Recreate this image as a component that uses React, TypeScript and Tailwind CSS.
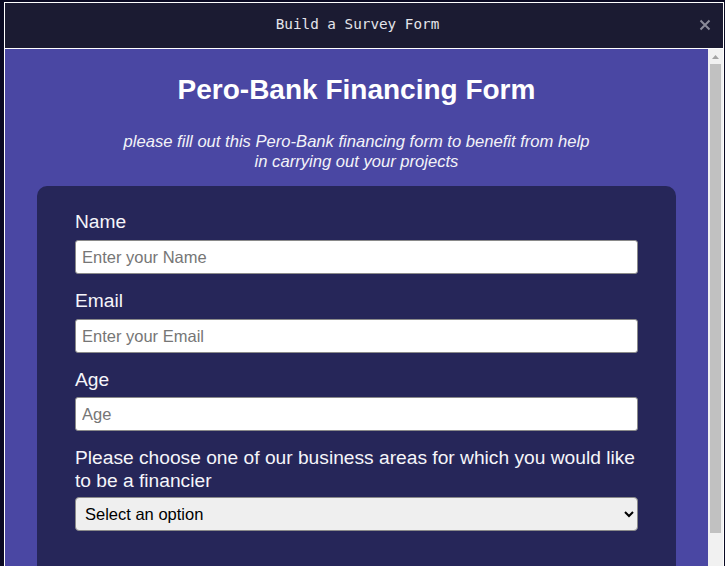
import React from "react";

export default function App() {
  const sans = { fontFamily: '"Liberation Sans", Arial, sans-serif' };
  return (
    <div className="relative w-[725px] h-[566px] overflow-hidden bg-[#0a0a23] pt-[2px] pl-[4px] pr-[1px]" style={sans}>
      <div className="relative flex flex-col w-[720px] h-[564px] border-l border-r border-t border-white">
        <div className="relative flex items-center justify-center h-[46px] shrink-0 bg-[#1b1b32] border-b border-white pr-[13px] pb-[2px]">
          <span
            className="text-[14.3px] text-[#e4e4ea]"
            style={{ fontFamily: '"DejaVu Sans Mono", monospace' }}
          >
            Build a Survey Form
          </span>
          <svg
            className="absolute right-[12px] top-[16px]"
            width="12"
            height="12"
            viewBox="0 0 12 12"
          >
            <path d="M1.5 1.5 L10.5 10.5 M10.5 1.5 L1.5 10.5" stroke="#8a8a98" strokeWidth="2" />
          </svg>
        </div>
        <div className="flex flex-1 overflow-hidden">
          <div className="flex-1 bg-[#4a47a3] pt-[25px] px-[32px] text-white">
            <h1 className="text-center text-[28px] leading-[32px] font-bold">Pero-Bank Financing Form</h1>
            <p className="mt-[26px] text-center italic text-[16.6px] leading-[20px] text-[#f3f3f8]">
              please fill out this Pero-Bank financing form to benefit from help
              <br />
              in carrying out your projects
            </p>
            <div className="mt-[14px] rounded-[10px] bg-[#262659] px-[38px] pt-[24px] pb-[80px]">
              <div className="flex flex-col gap-[15px]">
                <div className="flex flex-col">
                  <label className="text-[19.2px] leading-[23px] mb-[7px] text-[#f5f5fa]">Name</label>
                  <input
                    className="h-[34px] w-full rounded-[3px] border border-[#8a8a8a] bg-white pl-[6px] text-[16.5px] text-black placeholder:text-[#767676] outline-none"
                    placeholder="Enter your Name"
                  />
                </div>
                <div className="flex flex-col">
                  <label className="text-[19.2px] leading-[23px] mb-[7px] text-[#f5f5fa]">Email</label>
                  <input
                    className="h-[34px] w-full rounded-[3px] border border-[#8a8a8a] bg-white pl-[6px] text-[16.5px] text-black placeholder:text-[#767676] outline-none"
                    placeholder="Enter your Email"
                  />
                </div>
                <div className="flex flex-col">
                  <label className="text-[19.2px] leading-[23px] mb-[6px] text-[#f5f5fa]">Age</label>
                  <input
                    className="h-[34px] w-full rounded-[3px] border border-[#8a8a8a] bg-white pl-[6px] text-[16.5px] text-black placeholder:text-[#767676] outline-none"
                    placeholder="Age"
                  />
                </div>
                <div className="flex flex-col">
                  <label className="text-[19.2px] leading-[23px] mb-[5px] text-[#f5f5fa]">
                    Please choose one of our business areas for which you would like to be a financier
                  </label>
                  <select
                    className="h-[34px] w-full rounded-[4px] border border-[#8a8a8a] bg-[#efefef] pl-[5px] pr-[6px] text-[16.5px] text-black outline-none"
                    defaultValue=""
                  >
                    <option value="">Select an option</option>
                  </select>
                </div>
              </div>
            </div>
          </div>
          <div className="relative w-[15px] shrink-0 bg-[#f1f1f1]">
            <svg className="absolute left-[3px] top-[5px]" width="9" height="6" viewBox="0 0 9 6">
              <path d="M4.5 1 L8 5 L1 5 Z" fill="#a3a3a3" />
            </svg>
            <div className="absolute left-[2px] top-[15px] w-[11px] h-[469px] bg-[#c1c1c1]" />
          </div>
        </div>
      </div>
    </div>
  );
}
